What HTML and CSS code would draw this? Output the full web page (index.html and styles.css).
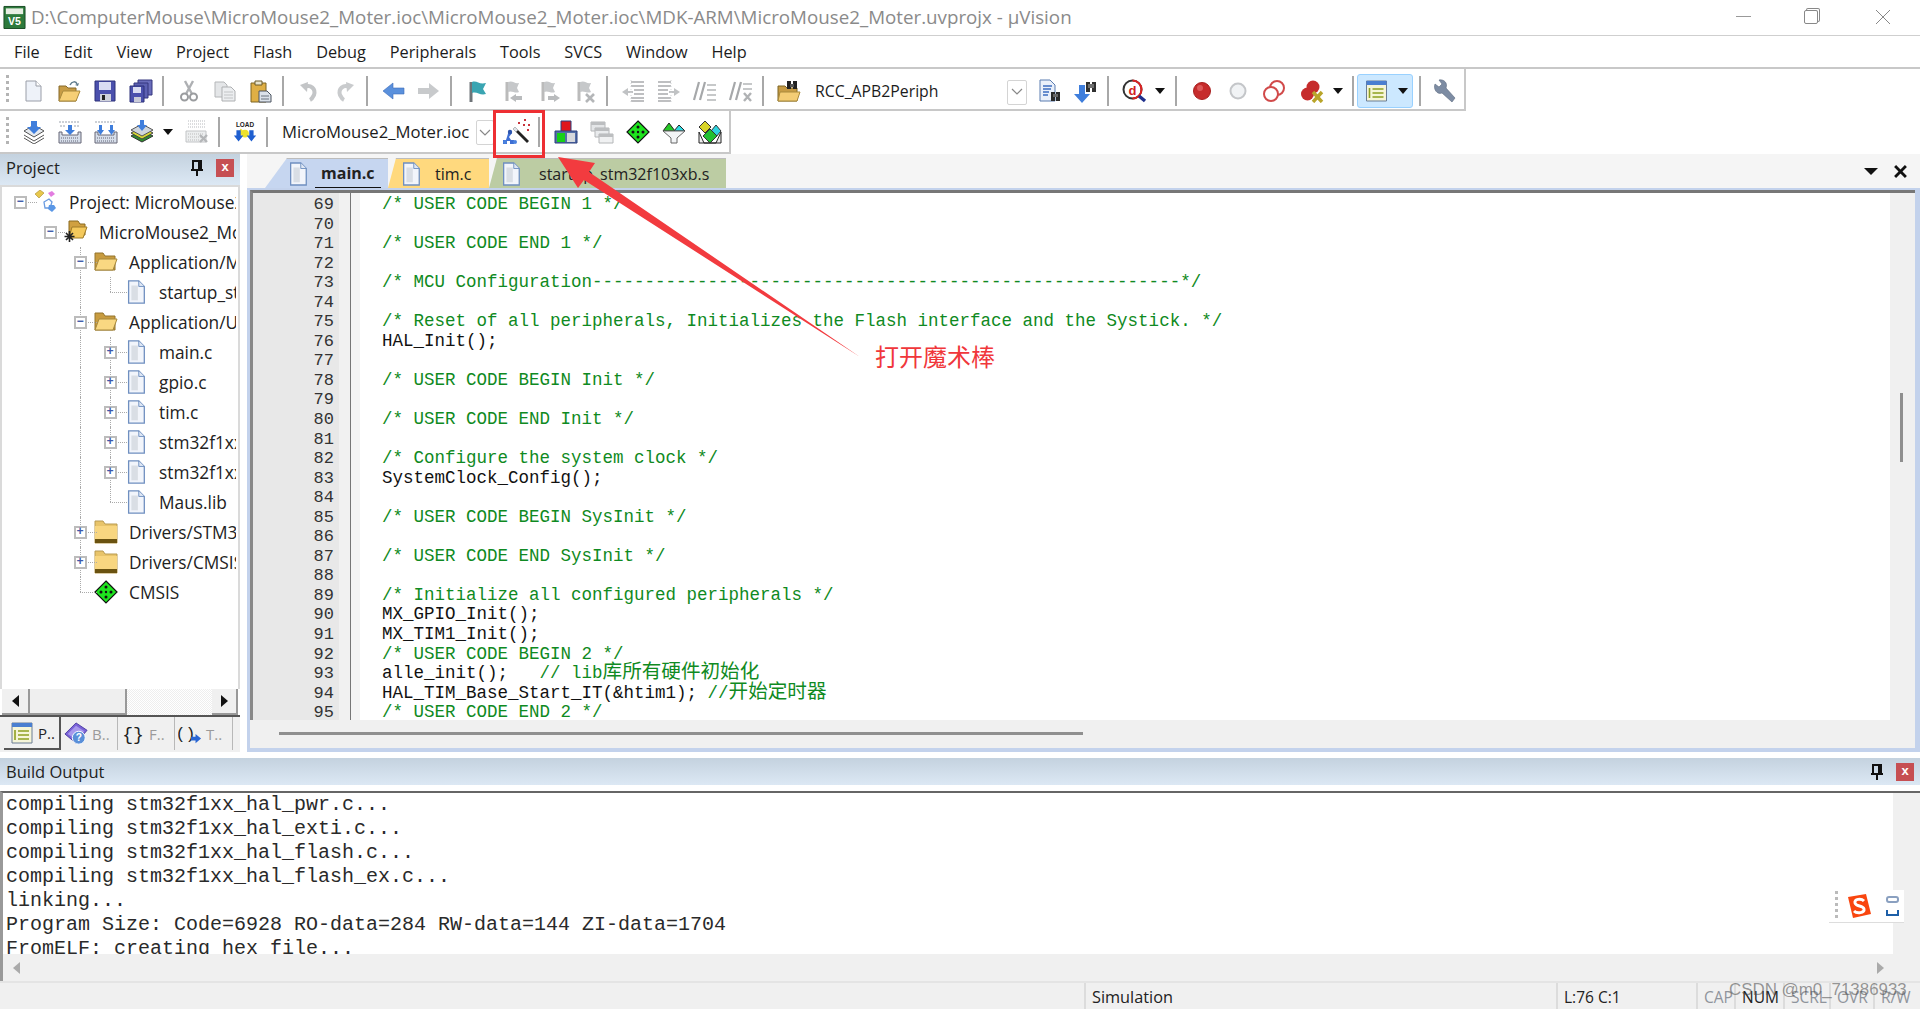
FILE: index.html
```html
<!DOCTYPE html>
<html lang="en">
<head>
<meta charset="utf-8">
<title>MicroMouse2_Moter - µVision</title>
<link rel="stylesheet" href="styles.css">
</head>
<body>
<svg class="sprite" aria-hidden="true">
<symbol id="i-new" viewBox="0 0 24 24"><path d="M5 2h10l5 5v15H5z" fill="#eef2f9" stroke="#9a9ea8"/><path d="M15 2v5h5" fill="#fff" stroke="#9a9ea8"/></symbol>
<symbol id="i-open" viewBox="0 0 24 24"><path d="M2 7h7l2 2h8v13H2z" fill="#c79c45" stroke="#86692a"/><path d="M6 12h17l-4 10H2z" fill="#f6cf75" stroke="#a98a3c"/><path d="M13 6c2-4 6-4 7-1" fill="none" stroke="#5d7a8c" stroke-width="1.5"/><path d="M18 6l3 1 1-3z" fill="#5d7a8c"/></symbol>
<symbol id="i-save" viewBox="0 0 24 24"><path d="M2 2h20v20H2z" fill="#4b50ad" stroke="#2d3178"/><path d="M6 3h12v8H6z" fill="#d9dcf2"/><path d="M7 15h11v7H7z" fill="#d0d2dc"/><path d="M9 16h3v5H9z" fill="#222"/></symbol>
<symbol id="i-saveall" viewBox="0 0 24 24"><path d="M9 1h14v15H9z" fill="#6a6dbb" stroke="#34377f"/><path d="M5 4h14v15H5z" fill="#5c60b2" stroke="#34377f"/><path d="M1 7h14v16H1z" fill="#4b50ad" stroke="#2d3178"/><path d="M4 8h8v6H4z" fill="#d9dcf2"/><path d="M5 18h7v5H5z" fill="#c9cbd8"/></symbol>
<symbol id="i-cut" viewBox="0 0 24 24"><path d="M8 2l7 13M16 2L9 15" stroke="#aeb0b3" stroke-width="2.4" fill="none"/><circle cx="7.5" cy="18" r="3.5" fill="none" stroke="#9a9c9f" stroke-width="2"/><circle cx="16.5" cy="18" r="3.5" fill="none" stroke="#9a9c9f" stroke-width="2"/></symbol>
<symbol id="i-copy" viewBox="0 0 24 24"><path d="M2 3h9l3 3v12H2z" fill="#e4e6e8" stroke="#b4b6b8"/><path d="M9 8h9l4 4v10H9z" fill="#eceef0" stroke="#aeb0b2"/><path d="M11 13h9M11 16h9M11 19h9" stroke="#c2c4c6"/></symbol>
<symbol id="i-paste" viewBox="0 0 24 24"><path d="M2 4h15v19H2z" fill="#dfaf45" stroke="#7d6425"/><path d="M6 2h7v4H6z" fill="#e8e4cc" stroke="#6a5a2a"/><path d="M10 12h8l4 4v7H10z" fill="#dbe2ea" stroke="#4c5560"/><path d="M12 17h8M12 20h8" stroke="#6b7480"/></symbol>
<symbol id="i-undo" viewBox="0 0 24 24"><path d="M7 8c7-3 12 2 10 8-1 2-2 4-4 5" fill="none" stroke="#c3c5c7" stroke-width="4"/><path d="M3 6l8-3-1 10z" fill="#c3c5c7"/></symbol>
<symbol id="i-redo" viewBox="0 0 24 24"><path d="M17 8c-7-3-12 2-10 8 1 2 2 4 4 5" fill="none" stroke="#c9cbcd" stroke-width="4"/><path d="M21 6l-8-3 1 10z" fill="#c9cbcd"/></symbol>
<symbol id="i-back" viewBox="0 0 24 24"><path d="M2 12l10-8v5h11v6H12v5z" fill="#5a90dc" stroke="#3c6cb8" stroke-width=".6"/></symbol>
<symbol id="i-fwd" viewBox="0 0 24 24"><path d="M22 12L12 4v5H1v6h11v5z" fill="#c8cacc"/></symbol>
<symbol id="i-flag" viewBox="0 0 24 24"><path d="M6 3v20" stroke="#6f7478" stroke-width="3"/><path d="M7 3c5-2 7 3 14 1l-3 6 3 5c-6 2-9-3-14-1z" fill="#3aa5b2"/></symbol>
<symbol id="i-flagl" viewBox="0 0 24 24"><path d="M6 3v19" stroke="#bbb" stroke-width="3"/><path d="M7 3c5-2 6 2 11 1l-2 5 2 4c-4 2-7-2-11 0z" fill="#c6c8ca"/><path d="M9 19l6-4v2h6v4h-6v2z" fill="#b9bbbd"/></symbol>
<symbol id="i-flagr" viewBox="0 0 24 24"><path d="M6 3v19" stroke="#bbb" stroke-width="3"/><path d="M7 3c5-2 6 2 11 1l-2 5 2 4c-4 2-7-2-11 0z" fill="#c6c8ca"/><path d="M23 19l-6-4v2h-6v4h6v2z" fill="#b9bbbd"/></symbol>
<symbol id="i-flagx" viewBox="0 0 24 24"><path d="M6 3v19" stroke="#bbb" stroke-width="3"/><path d="M7 3c5-2 6 2 11 1l-2 5 2 4c-4 2-7-2-11 0z" fill="#c6c8ca"/><path d="M13 15l8 8M21 15l-8 8" stroke="#b4b6b8" stroke-width="2.6"/></symbol>
<symbol id="i-ind" viewBox="0 0 24 24"><path d="M10 3h13M10 7h13M13 11h10M13 15h10M10 19h13M10 22h13" stroke="#a9abad" stroke-width="1.6"/><path d="M1 13l6-4v8z" fill="#c0c2c4"/><path d="M5 13h7" stroke="#c0c2c4" stroke-width="2"/><path d="M10 1v22" stroke="#d2d4d6" stroke-dasharray="1 2"/></symbol>
<symbol id="i-cmt" viewBox="0 0 24 24"><path d="M6 3L1 21M12 3L7 21" stroke="#a6a8aa" stroke-width="2.2"/><path d="M14 6h9M14 11h9M14 16h9M14 21h9" stroke="#b4b6b8" stroke-width="1.6"/></symbol>
<symbol id="i-uncmt" viewBox="0 0 24 24"><path d="M6 3L1 21M12 3L7 21" stroke="#a6a8aa" stroke-width="2.2"/><path d="M14 5h9M14 10h9" stroke="#b4b6b8" stroke-width="1.6"/><path d="M15 14l7 8M22 14l-7 8" stroke="#b0b2b4" stroke-width="2.4"/></symbol>
<symbol id="i-ffolder" viewBox="0 0 24 24"><path d="M1 7h7l2 2h10v13H1z" fill="#c79c45" stroke="#7d6425"/><path d="M3 13h20l-3 9H1z" fill="#f4cd75" stroke="#a98a3c"/><path d="M10 2h4v8h-4zM16 2h4v8h-4z" fill="#222"/><path d="M13 5h4v3h-4z" fill="#555"/></symbol>
<symbol id="i-fdoc" viewBox="0 0 24 24"><path d="M2 1h10l5 5v16H2z" fill="#eaf0fa" stroke="#5b7cb0"/><path d="M5 7h9M5 10h8M5 13h6M5 16h5" stroke="#3c6cc0" stroke-width="1.4"/><path d="M13 13h4v9h-4zM18 13h4v9h-4z" fill="#2a2a2a"/><path d="M15 15h5v3h-5z" fill="#666"/></symbol>
<symbol id="i-farrow" viewBox="0 0 24 24"><path d="M5 6h6v9h5l-8 9-8-9h5z" fill="#3f7edc"/><path d="M12 3h4v10h-4zM18 3h4v10h-4z" fill="#303030"/><path d="M14 5h6v4h-6z" fill="#707070"/></symbol>
<symbol id="i-debug" viewBox="0 0 24 24"><circle cx="10.500" cy="10.500" r="9" fill="#fff" stroke="#333" stroke-width="2"/><path d="M10.500 1.500a9 9 0 0 1 0 18" fill="none" stroke="#d22" stroke-width="2"/><text x="10.500" y="15.500" class="svg-d">d</text><path d="M17 17l6 5" stroke="#20308c" stroke-width="3.400"/></symbol>
<symbol id="i-bp" viewBox="0 0 24 24"><circle cx="12" cy="12" r="8.500" fill="#c62c2c" stroke="#a82020"/><circle cx="10" cy="9" r="3" fill="#dd5a5a"/></symbol>
<symbol id="i-bpo" viewBox="0 0 24 24"><circle cx="12" cy="12" r="7.500" fill="#f1f3f5" stroke="#c4c6c9" stroke-width="2"/></symbol>
<symbol id="i-bpe" viewBox="0 0 24 24"><circle cx="15" cy="9" r="7" fill="#fff" stroke="#d14a4a" stroke-width="2"/><circle cx="9" cy="15" r="7" fill="#fff" stroke="#d14a4a" stroke-width="2"/></symbol>
<symbol id="i-bpx" viewBox="0 0 24 24"><circle cx="13" cy="8" r="6.500" fill="#c62c2c"/><circle cx="7.500" cy="15" r="6.500" fill="#c62c2c"/><path d="M13 13l9 10M22 13l-9 10" stroke="#b9a52a" stroke-width="3.400"/></symbol>
<symbol id="i-win" viewBox="0 0 24 24"><path d="M2 2h20v20H2z" fill="#f6f5d8" stroke="#6b7c94"/><path d="M2 2h20v4H2z" fill="#4b7fd0"/><path d="M5 9v10M8 10h11M8 14h11M8 18h11" stroke="#8fa020" stroke-width="1.600"/></symbol>
<symbol id="i-wrench" viewBox="0 0 24 24"><path d="M3 5l4 3 3-3-3-4c5-1 9 3 7 8l9 10-3 4-10-9C5 16 1 10 3 5z" fill="#7d8ca3" stroke="#5c6a80" stroke-width=".6"/></symbol>
<symbol id="i-dl1" viewBox="0 0 24 24"><path d="M2 11l10-6 10 6-10 6z" fill="#e6eaef" stroke="#555"/><path d="M2 15l10 6 10-6M2 18l10 6 10-6" fill="none" stroke="#555"/><path d="M9 1h6v6h4l-7 7-7-7h4z" fill="#3f7edc"/></symbol>
<symbol id="i-dl2" viewBox="0 0 24 24"><path d="M2 1v2M5 1v2M8 1v2M11 1v2M14 1v2M17 1v2M20 1v2M3 5v2M6 5v2M17 5v2M20 5v2" stroke="#9aa2ad"/><path d="M1 12h3v3h16v-3h3v11H1z" fill="#d6deea" stroke="#667"/><path d="M3 18h18M3 21h18" stroke="#667" stroke-dasharray="1 1"/><path d="M10 5h4v5h3l-5 5-5-5h3z" fill="#3f7edc"/></symbol>
<symbol id="i-dl3" viewBox="0 0 24 24"><path d="M2 1v2M5 1v2M8 1v2M11 1v2M14 1v2M17 1v2M20 1v2" stroke="#9aa2ad"/><path d="M1 12h3v3h16v-3h3v11H1z" fill="#d6deea" stroke="#667"/><path d="M3 18h18M3 21h18" stroke="#667" stroke-dasharray="1 1"/><path d="M5 5h3v5h2l-3.500 5L3 10h2zM16 5h3v5h2l-3.500 5L14 10h2z" fill="#3f7edc"/></symbol>
<symbol id="i-layers" viewBox="0 0 24 24"><path d="M1 16l11-6 11 6-11 6z" fill="#2f8a2f" stroke="#333"/><path d="M1 13l11-6 11 6-11 6z" fill="#d7d834" stroke="#444"/><path d="M1 10l11-6 11 6-11 6z" fill="#d0d6dc" stroke="#555"/><path d="M10 0h4v5h3l-5 6-5-6h3z" fill="#3f7edc"/></symbol>
<symbol id="i-gridx" viewBox="0 0 24 24"><path d="M3 1h17M3 4h17M3 7h17" stroke="#cfd1d3" stroke-dasharray="1 1" stroke-width="1.500"/><path d="M1 11h20v11H1z" fill="#eceeef" stroke="#c2c4c6"/><path d="M3 14h16M3 17h16M3 20h11" stroke="#bbb" stroke-dasharray="1 1"/><path d="M15 15l7 7M22 15l-7 7" stroke="#b4b6b8" stroke-width="2.400"/></symbol>
<symbol id="i-load" viewBox="0 0 28 28"><text x="14" y="8" class="svg-load">LOAD</text><path d="M9 10l4 4-4 4-3-3z" fill="#f2e230"/><circle cx="14" cy="16" r="4.500" fill="#ece22c"/><path d="M4 12h5v6h3l-5.500 7L1 18h3zM19 12h5v6h3l-5.500 7L16 18h3z" fill="#1f5fd0"/></symbol>
<symbol id="i-wand" viewBox="0 0 28 28"><path d="M13 9l14 14-2 2L11 11z" fill="#222"/><path d="M13 9l3 3-2 2-3-3z" fill="#dfe3ea"/><path d="M7 12l3 3-3 4 2 3h3v4H8v-3H5v3H1v-4h3l1-3z" fill="#3f6fd4"/><circle cx="8" cy="14" r="2.200" fill="#2e55ae"/><circle cx="3" cy="24" r="2" fill="#4b82de"/><circle cx="13" cy="24" r="2" fill="#4b82de"/><path d="M16 5h2M22 2h2M21 7h2M26 7h2M25 12h2" stroke="#c8343c" stroke-width="1.800"/></symbol>
<symbol id="i-build" viewBox="0 0 24 24"><path d="M7 1h10v11H7z" fill="#e0161c" stroke="#2a3f7c"/><path d="M1 11h22v12H1z" fill="#546fa8" stroke="#2a3f7c"/><path d="M3 13h8v9H3z" fill="#18d018"/><path d="M13 13h8v9h-8z" fill="#d6d8dc"/></symbol>
<symbol id="i-copies" viewBox="0 0 24 24"><path d="M1 2h14v9H1z" fill="#e4e6e8" stroke="#b4b6b8"/><path d="M1 2h14v3H1z" fill="#bcbec0"/><path d="M5 8h14v9H5z" fill="#e9ebed" stroke="#b4b6b8"/><path d="M5 8h14v3H5z" fill="#bcbec0"/><path d="M9 14h14v9H9z" fill="#f0f1f2" stroke="#b4b6b8"/><path d="M9 14h14v3H9z" fill="#bcbec0"/></symbol>
<symbol id="i-dia" viewBox="0 0 24 24"><path d="M12 1l11 11-11 11L1 12z" fill="#1ee41e" stroke="#111" stroke-width="1.200"/><circle cx="12" cy="7" r="1.500" fill="#111"/><circle cx="7" cy="12" r="1.500" fill="#111"/><circle cx="17" cy="12" r="1.500" fill="#111"/><circle cx="12" cy="17" r="1.500" fill="#111"/><circle cx="12" cy="12" r="1.200" fill="#111"/></symbol>
<symbol id="i-funnel" viewBox="0 0 24 24"><path d="M1 11l6-8 6 8z" fill="#25c825" stroke="#222"/><path d="M12 11l5-6 6 6z" fill="#2fd8e0" stroke="#222"/><path d="M1 11h22l-8 7v5H9v-5z" fill="#f2f4f6" stroke="#666"/></symbol>
<symbol id="i-multi" viewBox="0 0 24 24"><path d="M1 12l5 11h12l5-11v11H1z" fill="#f0f0f0" stroke="#222"/><path d="M7 1l6 6-6 6-6-6z" fill="#d8d428" stroke="#333"/><path d="M18 5l5 6-5 6-5-6z" fill="#2ed4e0" stroke="#333"/><path d="M12 9l7 7-7 7-7-7z" fill="#20c030" stroke="#333"/></symbol>
<symbol id="i-doc" viewBox="0 0 24 26"><path d="M4 1h11l6 6v18H4z" fill="#f2f5fb" stroke="#6f8fc0" stroke-width="1.400"/><path d="M15 1v6h6" fill="#dfe7f4" stroke="#6f8fc0"/><path d="M7 6h7v16H7z" fill="#cfd4dc" opacity=".7"/></symbol>
<symbol id="i-proj" viewBox="0 0 24 24"><path d="M1 4l5-4 4 3-5 5z" fill="#e8c84c" stroke="#a88a2c" stroke-width=".6"/><path d="M14 3l4-2 3 3-4 3z" fill="#e27ce0"/><path d="M10 12l5-3 3 3-2 6-5 0z" fill="none" stroke="#6a9be0" stroke-width="1.300"/><path d="M15 15l5 0 2 3-4 4-4-3z" fill="#5a97e6"/></symbol>
<symbol id="i-target" viewBox="0 0 24 24"><path d="M5 1h9l2 3h5v11H5z" fill="#d0a040" stroke="#8a6a20"/><path d="M8 7h15l-4 11H5z" fill="#f4c95c" stroke="#a07c28"/><path d="M1 14l7 7M8 14l-7 7M4.500 12v11M-.5 17.500h10" stroke="#222" stroke-width="1.600" transform="translate(1 -1)"/></symbol>
<symbol id="i-fold" viewBox="0 0 24 24"><path d="M1 3h8l2 3h10v14H1z" fill="#c89c40" stroke="#94742c"/><path d="M5 9h18l-4 11H1z" fill="#f9d882" stroke="#a6883c"/></symbol>
<symbol id="i-foldc" viewBox="0 0 24 24"><path d="M1 1h8l2 3h12v19H1z" fill="#e8c46a" stroke="#b89a50"/><path d="M1 6h22v14H1z" fill="#f8d680"/><path d="M1 19h22v4H1z" fill="#6a5210"/></symbol>
<symbol id="i-book" viewBox="0 0 26 26"><path d="M1 13L13 1l12 8-12 14z" fill="#7a62d8" stroke="#4a3aa0"/><path d="M4 13L13 4l9 6-9 9z" fill="#a898ec"/><circle cx="16" cy="17" r="7" fill="#5a8fd8" stroke="#fff"/><text x="16" y="21" class="svg-q">?</text></symbol>
<symbol id="i-fn" viewBox="0 0 24 24"><text x="12" y="18" class="svg-fn">{}</text></symbol>
<symbol id="i-tpl" viewBox="0 0 26 24"><text x="8" y="17" class="svg-fn">()</text><path d="M14 15h5v-3l6 5-6 5v-3h-5z" fill="#2a66d4"/></symbol>
<symbol id="i-pin" viewBox="0 0 14 16"><path d="M3 1h8v9H3zM1 10h12M7 10v6" fill="none" stroke="#111" stroke-width="2"/><path d="M8 2h2v7H8z" fill="#111"/></symbol>
<symbol id="i-sogou" viewBox="0 0 26 26"><path d="M2 4l18-3 5 20-18 4z" fill="#f9460f"/><path d="M18 8c-3-3-10-2-9 2s8 2 9 6-7 5-10 2" fill="none" stroke="#fff" stroke-width="3"/></symbol>
<symbol id="i-logo" viewBox="0 0 24 24"><path d="M1 1h22v23H1z" fill="#2d7a3c" stroke="#174a22"/><path d="M3 3h18v6H3z" fill="#e8efe4"/><text x="12" y="20" class="svg-v5">V5</text></symbol>
</svg>

<header class="titlebar">
  <svg class="logo"><use href="#i-logo"/></svg>
  <span class="title-text">D:\ComputerMouse\MicroMouse2_Moter.ioc\MicroMouse2_Moter.ioc\MDK-ARM\MicroMouse2_Moter.uvprojx - µVision</span>
  <div class="winbtns">
    <span class="win-min"></span>
    <span class="win-max"></span>
    <svg class="win-close" viewBox="0 0 16 16"><path d="M1 1l14 14M15 1L1 15" stroke="#888" stroke-width="1"/></svg>
  </div>
</header>

<nav class="menubar">
  <span>File</span><span>Edit</span><span>View</span><span>Project</span><span>Flash</span><span>Debug</span><span>Peripherals</span><span>Tools</span><span>SVCS</span><span>Window</span><span>Help</span>
</nav>

<div class="toolbars">
  <div class="toolbar tb1">
    <i class="grip"></i>
    <svg class="ic"><use href="#i-new"/></svg><svg class="ic"><use href="#i-open"/></svg><svg class="ic"><use href="#i-save"/></svg><svg class="ic"><use href="#i-saveall"/></svg>
    <i class="sep"></i>
    <svg class="ic"><use href="#i-cut"/></svg><svg class="ic"><use href="#i-copy"/></svg><svg class="ic"><use href="#i-paste"/></svg>
    <i class="sep"></i>
    <svg class="ic"><use href="#i-undo"/></svg><svg class="ic"><use href="#i-redo"/></svg>
    <i class="sep"></i>
    <svg class="ic"><use href="#i-back"/></svg><svg class="ic"><use href="#i-fwd"/></svg>
    <i class="sep"></i>
    <svg class="ic"><use href="#i-flag"/></svg><svg class="ic"><use href="#i-flagl"/></svg><svg class="ic"><use href="#i-flagr"/></svg><svg class="ic"><use href="#i-flagx"/></svg>
    <i class="sep"></i>
    <svg class="ic"><use href="#i-ind"/></svg><svg class="ic flip"><use href="#i-ind"/></svg><svg class="ic"><use href="#i-cmt"/></svg><svg class="ic"><use href="#i-uncmt"/></svg>
    <i class="sep"></i>
    <svg class="ic"><use href="#i-ffolder"/></svg>
    <span class="combo-text find">RCC_APB2Periph</span>
    <span class="combo-btn"><svg viewBox="0 0 12 8"><path d="M1 1l5 5 5-5" fill="none" stroke="#888" stroke-width="1.200"/></svg></span>
    <svg class="ic after-combo"><use href="#i-fdoc"/></svg><svg class="ic"><use href="#i-farrow"/></svg>
    <i class="sep"></i>
    <svg class="ic"><use href="#i-debug"/></svg><i class="caret"></i>
    <i class="sep sep-wide"></i>
    <svg class="ic"><use href="#i-bp"/></svg><svg class="ic"><use href="#i-bpo"/></svg><svg class="ic"><use href="#i-bpe"/></svg><svg class="ic ic-gap2"><use href="#i-bpx"/></svg><i class="caret"></i>
    <i class="sep sep-thin"></i>
    <span class="hot"><svg class="ic"><use href="#i-win"/></svg><i class="caret"></i></span>
    <i class="sep sep-thin"></i>
    <svg class="ic ic-gap2"><use href="#i-wrench"/></svg>
  </div>
  <div class="toolbar tb2">
    <i class="grip"></i>
    <svg class="ic"><use href="#i-dl1"/></svg><svg class="ic"><use href="#i-dl2"/></svg><svg class="ic"><use href="#i-dl3"/></svg><svg class="ic"><use href="#i-layers"/></svg><i class="caret"></i>
    <svg class="ic ic-gap"><use href="#i-gridx"/></svg>
    <i class="sep"></i>
    <svg class="ic"><use href="#i-load"/></svg>
    <i class="sep"></i>
    <span class="combo-text target">MicroMouse2_Moter.ioc</span>
    <span class="combo-btn small"><svg viewBox="0 0 12 8"><path d="M1 1l5 5 5-5" fill="none" stroke="#888" stroke-width="1.200"/></svg></span>
    <svg class="ic wand"><use href="#i-wand"/></svg>
    <i class="sep sep-wand"></i>
    <svg class="ic"><use href="#i-build"/></svg><svg class="ic"><use href="#i-copies"/></svg><svg class="ic"><use href="#i-dia"/></svg><svg class="ic"><use href="#i-funnel"/></svg><svg class="ic"><use href="#i-multi"/></svg>
  </div>
</div>

<main class="workspace">
  <aside class="sidebar">
    <div class="dockhead">
      <span>Project</span>
      <div class="dockbtns"><svg class="pin"><use href="#i-pin"/></svg><span class="dockx">x</span></div>
    </div>
    <div class="tree">
      <div class="row"><b class="c h"><em class="box">−</em></b><svg class="ti"><use href="#i-proj"/></svg><span class="tl">Project: MicroMouse2_Moter</span></div>
      <div class="row"><b class="c"></b><b class="c h"><em class="box">−</em></b><svg class="ti"><use href="#i-target"/></svg><span class="tl">MicroMouse2_Moter.ioc</span></div>
      <div class="row"><b class="c"></b><b class="c"></b><b class="c v h"><em class="box">−</em></b><svg class="ti"><use href="#i-fold"/></svg><span class="tl">Application/MDK-ARM</span></div>
      <div class="row"><b class="c"></b><b class="c"></b><b class="c v"></b><b class="c l"></b><svg class="ti"><use href="#i-doc"/></svg><span class="tl">startup_stm32f103xb.s</span></div>
      <div class="row"><b class="c"></b><b class="c"></b><b class="c v h"><em class="box">−</em></b><svg class="ti"><use href="#i-fold"/></svg><span class="tl">Application/User</span></div>
      <div class="row"><b class="c"></b><b class="c"></b><b class="c v"></b><b class="c v h"><em class="box">+</em></b><svg class="ti"><use href="#i-doc"/></svg><span class="tl">main.c</span></div>
      <div class="row"><b class="c"></b><b class="c"></b><b class="c v"></b><b class="c v h"><em class="box">+</em></b><svg class="ti"><use href="#i-doc"/></svg><span class="tl">gpio.c</span></div>
      <div class="row"><b class="c"></b><b class="c"></b><b class="c v"></b><b class="c v h"><em class="box">+</em></b><svg class="ti"><use href="#i-doc"/></svg><span class="tl">tim.c</span></div>
      <div class="row"><b class="c"></b><b class="c"></b><b class="c v"></b><b class="c v h"><em class="box">+</em></b><svg class="ti"><use href="#i-doc"/></svg><span class="tl">stm32f1xx_it.c</span></div>
      <div class="row"><b class="c"></b><b class="c"></b><b class="c v"></b><b class="c v h"><em class="box">+</em></b><svg class="ti"><use href="#i-doc"/></svg><span class="tl">stm32f1xx_hal_msp.c</span></div>
      <div class="row"><b class="c"></b><b class="c"></b><b class="c v"></b><b class="c l"></b><svg class="ti"><use href="#i-doc"/></svg><span class="tl">Maus.lib</span></div>
      <div class="row"><b class="c"></b><b class="c"></b><b class="c v h"><em class="box">+</em></b><svg class="ti"><use href="#i-foldc"/></svg><span class="tl">Drivers/STM32F1xx_HAL</span></div>
      <div class="row"><b class="c"></b><b class="c"></b><b class="c v h"><em class="box">+</em></b><svg class="ti"><use href="#i-foldc"/></svg><span class="tl">Drivers/CMSIS</span></div>
      <div class="row"><b class="c"></b><b class="c"></b><b class="c l"></b><svg class="ti"><use href="#i-dia"/></svg><span class="tl">CMSIS</span></div>
    </div>
    <div class="side-scroll">
      <span class="sb-btn"><i class="tri-l"></i></span>
      <span class="sb-thumb"></span>
      <span class="sb-track"></span>
      <span class="sb-btn"><i class="tri-r"></i></span>
    </div>
    <div class="side-tabs">
      <span class="stab on"><svg class="sti"><use href="#i-win"/></svg>P..</span>
      <span class="stab"><svg class="sti"><use href="#i-book"/></svg>B..</span>
      <span class="stab"><svg class="sti"><use href="#i-fn"/></svg>F..</span>
      <span class="stab"><svg class="sti"><use href="#i-tpl"/></svg>T..</span>
    </div>
  </aside>

  <section class="editor">
    <div class="tabstrip">
      <span class="tab t-main"><svg class="tdoc"><use href="#i-doc"/></svg><span class="tname">main.c</span></span>
      <span class="tab t-tim"><svg class="tdoc"><use href="#i-doc"/></svg><span>tim.c</span></span>
      <span class="tab t-start"><svg class="tdoc"><use href="#i-doc"/></svg><span>startup_stm32f103xb.s</span></span>
      <span class="tab-ctrl"><i class="tab-caret"></i><svg class="tab-x" viewBox="0 0 12 12"><path d="M1 1l10 10M11 1L1 11" stroke="#111" stroke-width="2.600"/></svg></span>
    </div>
    <div class="frame">
      <div class="codepane">
        <div class="gutter">
<div>69</div><div>70</div><div>71</div><div>72</div><div>73</div><div>74</div><div>75</div><div>76</div><div>77</div><div>78</div><div>79</div><div>80</div><div>81</div><div>82</div><div>83</div><div>84</div><div>85</div><div>86</div><div>87</div><div>88</div><div>89</div><div>90</div><div>91</div><div>92</div><div>93</div><div>94</div><div>95</div>
        </div>
        <div class="foldbar"></div>
        <pre class="code"><span class="g">/* USER CODE BEGIN 1 */</span>

<span class="g">/* USER CODE END 1 */</span>

<span class="g">/* MCU Configuration--------------------------------------------------------*/</span>

<span class="g">/* Reset of all peripherals, Initializes the Flash interface and the Systick. */</span>
HAL_Init();

<span class="g">/* USER CODE BEGIN Init */</span>

<span class="g">/* USER CODE END Init */</span>

<span class="g">/* Configure the system clock */</span>
SystemClock_Config();

<span class="g">/* USER CODE BEGIN SysInit */</span>

<span class="g">/* USER CODE END SysInit */</span>

<span class="g">/* Initialize all configured peripherals */</span>
MX_GPIO_Init();
MX_TIM1_Init();
<span class="g">/* USER CODE BEGIN 2 */</span>
alle_init();   <span class="g">// lib<span class="zh">库所有硬件初始化</span></span>
HAL_TIM_Base_Start_IT(&amp;htim1); <span class="g">//<span class="zh">开始定时器</span></span>
<span class="g">/* USER CODE END 2 */</span></pre>
        <div class="vscroll"><span class="vthumb"></span></div>
      </div>
      <div class="hscroll"><span class="hthumb"></span></div>
    </div>
  </section>
</main>

<section class="output">
  <div class="dockhead outhead">
    <span>Build Output</span>
    <div class="dockbtns"><svg class="pin"><use href="#i-pin"/></svg><span class="dockx">x</span></div>
  </div>
  <div class="outbody">
    <div class="outrow">
      <pre class="outtext">compiling stm32f1xx_hal_pwr.c...
compiling stm32f1xx_hal_exti.c...
compiling stm32f1xx_hal_flash.c...
compiling stm32f1xx_hal_flash_ex.c...
linking...
Program Size: Code=6928 RO-data=284 RW-data=144 ZI-data=1704
FromELF: creating hex file...</pre>
      <div class="outv"></div>
    </div>
    <div class="outh"><i class="tri-l soft"></i><i class="tri-r soft"></i></div>
  </div>
  <div class="sogou">
    <i class="sg-dots"></i>
    <svg class="sg-s"><use href="#i-sogou"/></svg>
    <span class="sg-side"><i class="sg-o"></i><i class="sg-u"></i></span>
  </div>
</section>

<footer class="status">
  <span class="st st-fill"></span>
  <span class="st st-sim">Simulation</span>
  <span class="st st-lc">L:76 C:1</span>
  <span class="st st-cap off">CAP</span>
  <span class="st st-num">NUM</span>
  <span class="st st-scrl off">SCRL</span>
  <span class="st st-ovr off">OVR</span>
  <span class="st st-rw off">R/W</span>
</footer>

<div class="watermark">CSDN @m0_71386933</div>
<span class="redbox"></span>
<svg class="arrow" viewBox="0 0 400 220"><polygon points="8,7 45,13 39,22 310,207 34,30 28,38" fill="#f23b3f"/></svg>
<span class="note">打开魔术棒</span>
</body>
</html>
```

FILE: styles.css
```css
* { box-sizing: border-box; }
html, body { margin: 0; height: 100%; }
body {
  width: 1920px; height: 1009px; overflow: hidden; position: relative;
  display: flex; flex-direction: column;
  background: #fff; color: #222;
  font-family: "Open Sans", "Noto Sans", "Noto Sans CJK SC", sans-serif;
}
i, b, em { font-style: normal; font-weight: normal; }
.sprite { display: none; }
.svg-d { font: bold 13px "Liberation Sans", sans-serif; fill: #d21f1f; text-anchor: middle; }
.svg-load { font: bold 7.500px "Liberation Sans", sans-serif; fill: #222; text-anchor: middle; }
.svg-q { font: bold 11px "Liberation Sans", sans-serif; fill: #fff; text-anchor: middle; }
.svg-fn { font: 18px "Liberation Mono", monospace; fill: #222; text-anchor: middle; }
.svg-v5 { font: bold 11px "Liberation Sans", sans-serif; fill: #fff; text-anchor: middle; }

/* title */
.titlebar { height: 36px; flex: none; display: flex; align-items: center; border-bottom: 1px solid #cfcfcf; padding: 0 0 2px 3px; }
.logo { width: 23px; height: 24px; flex: none; }
.title-text { margin-left: 5px; font-size: 18.750px; color: #8a8a8a; white-space: nowrap; }
.winbtns { margin-left: auto; display: flex; align-items: center; }
.win-min { width: 15px; height: 1px; background: #999; margin-right: 53px; }
.win-max { width: 14px; height: 14px; border: 1px solid #888; border-radius: 2px; margin-right: 57px; box-shadow: 2px -2px 0 -1px #fff, 2px -2px 0 0 #888; }
.win-close { width: 16px; height: 16px; margin-right: 29px; }

/* menu */
.menubar { height: 33px; flex: none; display: flex; align-items: center; gap: 23.900px; padding-left: 14px; border-bottom: 2px solid #c8c8c8; font-size: 16.300px; color: #1c1c1c; }

/* toolbars */
.toolbars { height: 85px; flex: none; display: flex; flex-direction: column; }
.toolbar { display: flex; align-items: center; position: relative; padding-left: 16px; background: #fff; border-right: 2px solid #c8c8c8; }
.tb1 { height: 42px; width: 1466px; border-bottom: 2px solid #c8c8c8; padding: 4px 0 0 15px; }
.tb2 { height: 43px; width: 731px; border-bottom: 2px solid #c8c8c8; }
.grip { position: absolute; left: 6px; top: 6px; bottom: 6px; width: 3px; background-image: linear-gradient(#b4b4b4 50%, transparent 50%); background-size: 3px 6px; }
.ic { width: 36px; height: 24px; flex: none; }
.ic-gap { margin-left: 3px; }
.ic-gap2 { margin-left: 2px; }
.flip { transform: scaleX(-1); }
.sep { width: 2px; height: 30px; margin: 0 7px 0 3px; background: #a8a8a8; flex: none; }
.sep-wide { margin-left: 7px; }
.sep-thin { margin: 0 3px 0 6px; }
.caret { width: 16px; height: 8px; flex: none; position: relative; }
.caret::before { content: ""; position: absolute; left: 3px; top: 1px; border: 5px solid transparent; border-top: 6px solid #111; border-bottom: 0; }
.hot { width: 56px; height: 34px; flex: none; display: flex; align-items: center; background: #cce8ff; border: 1px solid #99d1ff; border-radius: 3px; }
.hot .ic { width: 37px; }
.combo-text { font-size: 15.800px; color: #1c1c1c; white-space: nowrap; flex: none; }
.find { width: 200px; padding-left: 8px; }
.target { width: 202px; margin-left: -1px; padding-left: 8px; font-size: 16.700px; }
.combo-btn { width: 20px; height: 25px; flex: none; border: 1px solid #d4d4d4; border-radius: 2px; display: flex; align-items: center; justify-content: center; margin-top: 2px; }
.combo-btn svg { width: 12px; height: 8px; }
.combo-btn.small { width: 18px; }
.after-combo { margin-left: 5px; }
.wand { margin-left: 4px; width: 36px; height: 28px; }
.sep-wand { margin: 0 8px 0 4px; }

/* workspace */
.workspace { height: 604px; flex: none; display: flex; }
.sidebar { width: 240px; flex: none; display: flex; flex-direction: column; }
.dockhead { height: 31px; flex: none; display: flex; align-items: center; justify-content: space-between; padding: 0 6px; background: linear-gradient(#c4d2df, #dce8f4); font-size: 16.500px; color: #222; }
.sidebar .dockhead { padding-bottom: 4px; }
.dockbtns { display: flex; align-items: center; gap: 12px; }
.pin { width: 14px; height: 16px; }
.dockx { width: 18px; height: 18px; background: #c64f53; color: #fff; font: bold 13px/16px "Liberation Sans", sans-serif; text-align: center; }
.tree { height: 504px; flex: none; background: #fff; border: 2px solid #dadada; border-bottom: 0; overflow: hidden; padding-left: 3px; }
.row { height: 30px; display: flex; align-items: center; width: 231px; overflow: hidden; }
.c { width: 30px; height: 30px; flex: none; position: relative; display: flex; align-items: center; justify-content: center; }
.c.v::before, .c.l::before { content: ""; position: absolute; left: 15px; top: 0; bottom: 0; border-left: 1px dotted #aaa; }
.c.l::before { bottom: 15px; }
.c.l::after, .c.h::after { content: ""; position: absolute; left: 15px; right: -2px; top: 15px; border-top: 1px dotted #aaa; }
.box { position: relative; z-index: 1; width: 13px; height: 13px; border: 2px solid #bcbcbc; background: #fff; color: #3c58a8; font: bold 12px/9px "Liberation Mono", monospace; text-align: center; }
.tl { margin-left: 11px; font-size: 17.300px; color: #222; white-space: nowrap; }
.ti { width: 24px; height: 24px; flex: none; margin-left: -1px; }
.side-scroll { height: 26px; flex: none; display: flex; margin: 0 2px; background-image: repeating-conic-gradient(#eee 0 25%, #fff 0 50%); background-size: 2px 2px; }
.sb-btn { width: 29px; background: #f0f0f0; border-right: 2px solid #999; border-bottom: 2px solid #999; display: flex; align-items: center; justify-content: center; }
.sb-btn:first-child { width: 28px; }
.sb-btn:last-child { width: 26px; }
.sb-thumb { width: 97px; background: #efefef; border-right: 2px solid #999; border-bottom: 2px solid #999; }
.sb-track { flex: 1; }
.tri-l, .tri-r { display: block; width: 0; height: 0; border-top: 6px solid transparent; border-bottom: 6px solid transparent; }
.tri-l { border-right: 7px solid #111; }
.tri-r { border-left: 7px solid #111; }
.side-tabs { height: 37px; flex: none; display: flex; align-items: flex-start; border-top: 2px solid #555; padding-left: 4px; background: #f0f0f0; }
.stab { width: 57px; height: 33px; display: flex; align-items: center; gap: 4px; color: #9a9a9a; font-size: 15px; padding-left: 3px; border-right: 1px solid #b8b8b8; }
.stab.on { color: #222; padding-left: 6px; border-right: 2px solid #555; border-bottom: 2px solid #555; }
.stab:nth-child(4) { width: 58px; }
.sti { width: 24px; height: 24px; flex: none; }

/* editor */
.editor { margin-left: 7px; flex: 1; min-width: 0; display: flex; flex-direction: column; }
.tabstrip { height: 34px; flex: none; display: flex; align-items: flex-end; background: #f5f5f5; padding-left: 18px; }
.tab { height: 30px; display: flex; align-items: center; font-size: 16px; color: #222; flex: none; position: relative; border-top: 1px solid #bcbcbc; }
.tdoc { width: 22px; height: 26px; flex: none; }
.t-main { width: 123px; background: #c6d6f0; padding-left: 22px; gap: 12px; clip-path: polygon(22px 0, 100% 0, 100% 100%, 0 100%); }
.tname { font-weight: 700; border-bottom: 2px solid #111; padding: 0 6px; margin-left: -6px; line-height: 28px; }
.t-tim { width: 101px; background: #ffd97e; padding-left: 12px; gap: 13px; clip-path: polygon(8px 0, 100% 0, 100% 100%, 0 100%); }
.t-start { width: 237px; background: #bccca3; padding-left: 11px; gap: 17px; clip-path: polygon(8px 0, 100% 0, 100% 100%, 0 100%); }
.tab-ctrl { margin-left: auto; height: 34px; display: flex; align-items: center; gap: 16px; padding-right: 13px; }
.tab-caret { border: 7px solid transparent; border-top: 7px solid #111; border-bottom: 0; }
.tab-x { width: 13px; height: 13px; }
.frame { flex: 1; min-height: 0; display: flex; flex-direction: column; margin-bottom: 6px; border-top: 2px solid #c3d2ec; border-left: 3px solid #c3d2ec; border-right: 5px solid #c3d2ec; border-bottom: 4px solid #c3d2ec; }
.codepane { height: 530px; flex: none; display: flex; overflow: hidden; border-top: 3px solid #777; border-left: 3px solid #888; }
.gutter { width: 86px; flex: none; background: #e8e8e8; text-align: right; padding: 2px 5px 0 0; font: 17px/19.540px "Liberation Mono", monospace; color: #333; }
.foldbar { width: 21px; flex: none; background: linear-gradient(90deg, #f1f1f1 11px, #777 11px, #777 12px, #f4f4f4 12px); }
.code { flex: 1; margin: 0; padding: 2px 0 0 22px; font: 17.500px/19.540px "Liberation Mono", "Noto Sans CJK SC", monospace; color: #111; overflow: hidden; }
.g { color: #0f8a22; }
.zh { font: 19.600px/1px "Noto Sans CJK SC", sans-serif; }
.vscroll { width: 25px; flex: none; background: #f0f0f0; position: relative; }
.vthumb { position: absolute; left: 10px; top: 200px; width: 3px; height: 69px; background: #8f8f8f; }
.hscroll { flex: 1; background: #f0f0f0; position: relative; }
.hthumb { position: absolute; left: 29px; top: 12px; width: 804px; height: 3px; background: #8f8f8f; }

/* output */
.output { height: 223px; flex: none; position: relative; display: flex; flex-direction: column; }
.outhead { height: 27px; padding-right: 6px; }
.outbody { flex: 1; min-height: 0; display: flex; flex-direction: column; margin-top: 6px; border-top: 2px solid #666; border-left: 3px solid #999; }
.outrow { height: 161px; flex: none; display: flex; overflow: hidden; }
.outtext { flex: 1; margin: 0; padding-left: 3px; font: 20px/24px "Liberation Mono", monospace; color: #2a2a2a; overflow: hidden; }
.outv { width: 27px; flex: none; background: #f0f0f0; }
.outh { flex: 1; background: #f0f0f0; display: flex; align-items: center; justify-content: space-between; padding: 0 36px 0 10px; }
.soft.tri-l { border-right-color: #aaa; }
.soft.tri-r { border-left-color: #aaa; }
.sogou { position: absolute; left: 1829px; top: 132px; width: 75px; height: 33px; background: #fff; border-bottom: 1px solid #ddd; display: flex; align-items: center; }
.sg-dots { width: 3px; height: 30px; margin-left: 6px; background-image: linear-gradient(#bbb 50%, transparent 50%); background-size: 3px 6px; }
.sg-s { width: 26px; height: 26px; margin-left: 8px; }
.sg-side { margin-left: 14px; display: flex; flex-direction: column; gap: 7px; width: 13px; }
.sg-o { height: 7px; border: 2px solid #8aa0c0; border-radius: 3px; }
.sg-u { height: 6px; border: 2px solid #1d5fa8; border-top: 0; }

/* status */
.status { height: 29px; flex: none; display: flex; background: #f0f0f0; border-top: 2px solid #e4e4e4; font-size: 15.500px; color: #222; }
.st { display: flex; align-items: center; border-left: 2px solid #dcdcdc; padding-left: 6px; white-space: nowrap; overflow: hidden; flex: none; }
.st-fill { width: 1084px; border: 0; }
.st-sim { width: 472px; font-size: 16.300px; }
.st-lc { width: 140px; }
.st-cap { width: 38px; }
.st-num { width: 49px; }
.st-scrl { width: 46px; }
.st-ovr { width: 44px; }
.st-rw { width: 47px; }
.off { color: #8f949c; }
.watermark { position: absolute; left: 1729px; top: 980px; font: 16.900px "Liberation Sans", sans-serif; color: rgba(70,70,70,.55); white-space: nowrap; }

/* annotation */
.redbox { position: absolute; left: 493px; top: 110px; width: 52px; height: 48px; border: 3.500px solid #ee2f33; }
.arrow { position: absolute; left: 550px; top: 150px; width: 400px; height: 220px; }
.note { position: absolute; left: 875px; top: 339px; font: 24px/34px "Noto Sans CJK SC", sans-serif; color: #f0373b; white-space: nowrap; }
```
